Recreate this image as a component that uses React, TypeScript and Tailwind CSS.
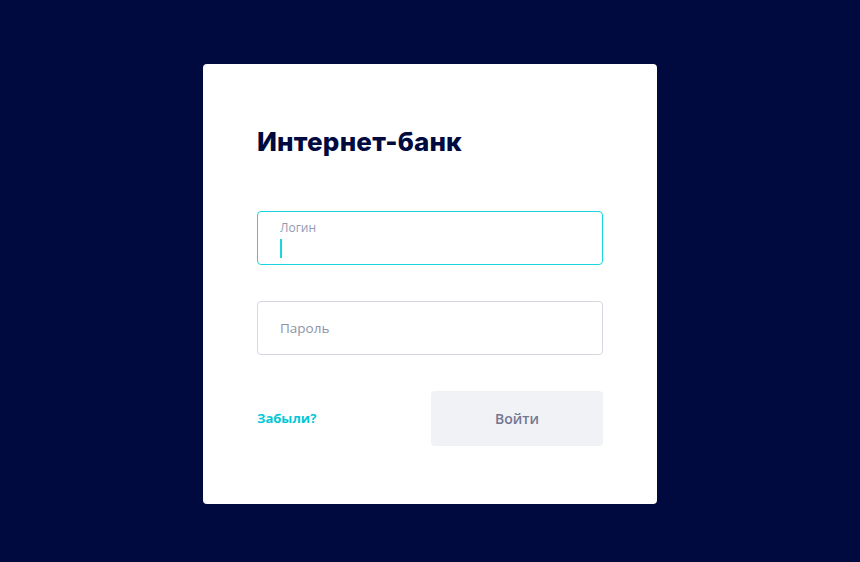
export default function App() {
  return (
    <div className="flex h-[562px] w-full justify-center bg-[#000a3f] pt-[64px] font-['Open_Sans',sans-serif]">
      <div className="h-[440px] w-[454px] rounded-[4px] bg-white px-[54px] pt-[62px]">
        <h1 className="font-['Inter',sans-serif] text-[26px] font-extrabold leading-[32px] tracking-[0.2px] text-[#000a3f]">
          Интернет-банк
        </h1>

        <div className="mt-[53px] flex h-[54px] flex-col rounded-[4px] border border-[#1ad6e0] px-[22px] pt-[8px]">
          <span className="text-[12px] leading-[16px] text-[#9599b0]">Логин</span>
          <span className="mt-[3px] h-[19px] w-[2px] bg-[#1ad6e0]" />
        </div>

        <div className="mt-[36px] flex h-[54px] items-center rounded-[4px] border border-[#d6d7e0] px-[22px]">
          <span className="text-[13.5px] text-[#8e92a8]">Пароль</span>
        </div>

        <div className="mt-[36px] flex items-center justify-between">
          <a className="text-[13px] font-bold text-[#00c9d8]">Забыли?</a>
          <button
            type="button"
            className="h-[55px] w-[172px] rounded-[4px] bg-[#f1f2f6] text-[14px] font-semibold text-[#737792]"
          >
            Войти
          </button>
        </div>
      </div>
    </div>
  );
}
